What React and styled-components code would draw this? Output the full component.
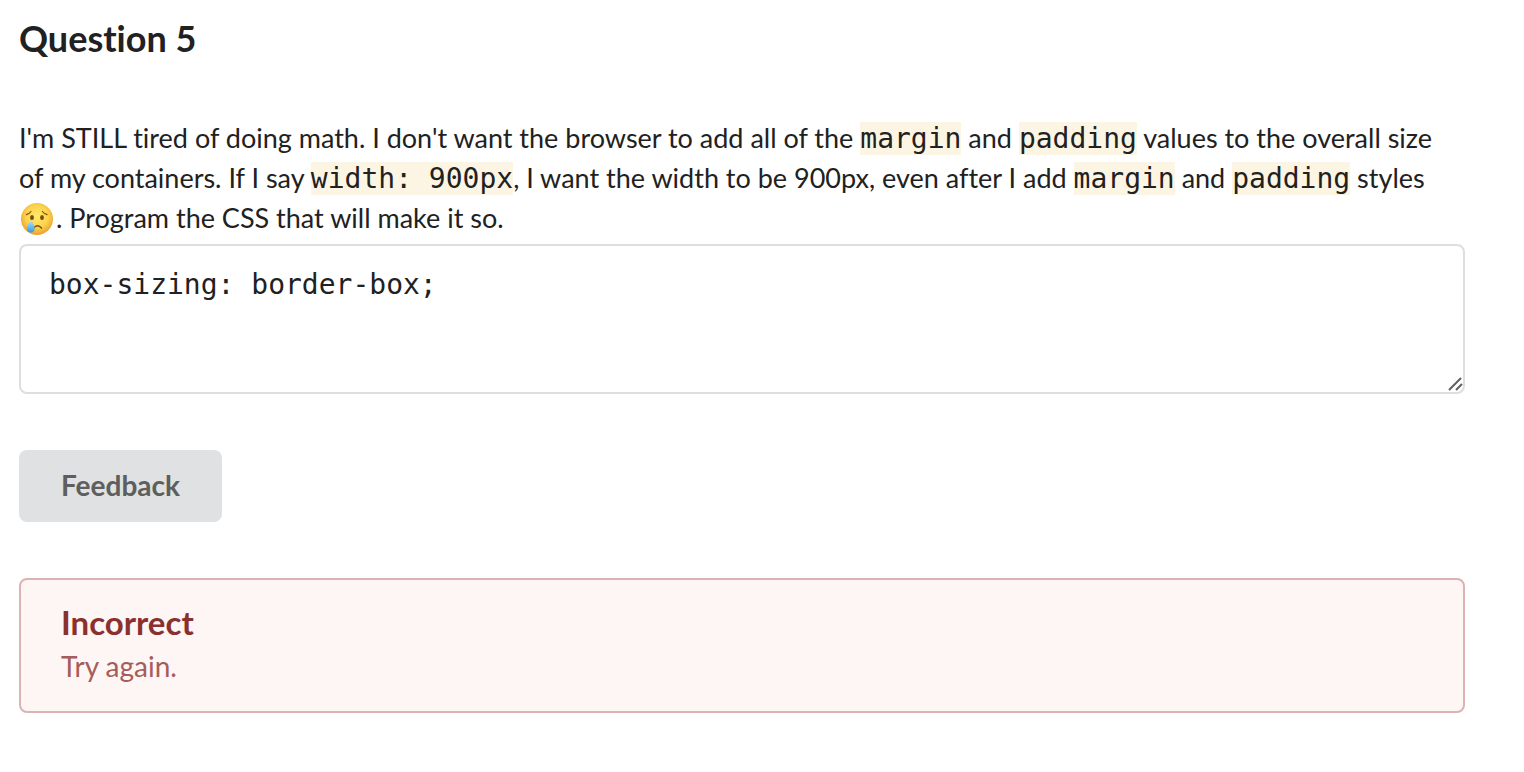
import React, { useState } from "react";
import styled, { createGlobalStyle } from "styled-components";

const GlobalStyle = createGlobalStyle`
	body {
		margin: 0;
		background: #ffffff;
		color: #212121;
		font-family: Lato, sans-serif;
		font-size: 28px;
		line-height: 40px;
		font-variant-ligatures: none;
	}
`;

const Question = styled.form`
	box-sizing: border-box;
	padding: 15px 59px 59px 19px;
`;

const Title = styled.h2`
	margin: 0 0 57px;
	font-size: 36px;
	line-height: 46px;
	font-weight: 700;
`;

const Prompt = styled.label`
	display: block;
	font-size: 27px;
`;

const PromptLine = styled.span`
	display: block;
`;

const Code = styled.code`
	background-color: #fdf5e3;
	font-family: "DejaVu Sans Mono", monospace;
	font-size: 28px;
	line-height: 32px;
`;

const CryingFace = styled.svg`
	width: 34px;
	height: 34px;
	margin: 0 2px 0 1px;
	vertical-align: -8px;
`;

const AnswerField = styled.div`
	position: relative;
	margin: 6px 0 56px;
`;

const Answer = styled.textarea`
	display: block;
	box-sizing: border-box;
	width: 100%;
	height: 150px;
	padding: 19px 28px;
	border: 2px solid #dededf;
	border-radius: 8px;
	outline: none;
	resize: vertical;
	background: #ffffff;
	color: #212121;
	font-family: "DejaVu Sans Mono", monospace;
	font-size: 28px;
	line-height: 40px;

	&::-webkit-resizer {
		background: transparent;
	}
`;

const ResizeGrip = styled.svg`
	position: absolute;
	right: 2px;
	bottom: 2px;
	width: 16px;
	height: 16px;
	pointer-events: none;
`;

const FeedbackButton = styled.button`
	display: block;
	padding: 15px 42px 17px;
	border: 0;
	border-radius: 8px;
	background-color: #e0e1e2;
	color: #5e5e5e;
	font-family: inherit;
	font-size: 28px;
	font-weight: 700;
	line-height: 40px;
	cursor: pointer;
`;

const Message = styled.div`
	margin-top: 56px;
	padding: 20px 40px 25px;
	border: 2px solid #dbb3b3;
	border-radius: 8px;
	background-color: #fef5f5;
	color: #a65c5a;
`;

const MessageHeader = styled.h3`
	margin: 0 0 2px;
	color: #8a302d;
	font-size: 33px;
	line-height: 44px;
	font-weight: 700;
`;

const MessageText = styled.p`
	margin: 0;
`;

const Cry = () => (
	<CryingFace viewBox="0 0 34 34" role="img" aria-label="crying face">
		<defs>
			<radialGradient id="face" cx="50%" cy="42%" r="58%">
				<stop offset="0" stopColor="#ffe96b" />
				<stop offset="0.6" stopColor="#fcd34c" />
				<stop offset="1" stopColor="#e8a030" />
			</radialGradient>
			<linearGradient id="tear" x1="0" y1="0" x2="0" y2="1">
				<stop offset="0" stopColor="#b5e2fb" />
				<stop offset="1" stopColor="#2f9be8" />
			</linearGradient>
		</defs>
		<circle cx="17" cy="17" r="16" fill="url(#face)" />
		<path
			d="M6.5 12.5q3-.6 4.5-3M22.5 9.5q1.5 2.4 4.5 3"
			fill="none"
			stroke="#8b5a16"
			strokeWidth="1.3"
			strokeLinecap="round"
		/>
		<ellipse cx="12" cy="15.5" rx="1.9" ry="2.6" fill="#7a4a12" />
		<ellipse cx="22" cy="15.5" rx="1.9" ry="2.6" fill="#7a4a12" />
		<path
			d="M13.5 26q4-4.5 8 0"
			fill="none"
			stroke="#7a4a12"
			strokeWidth="1.5"
			strokeLinecap="round"
		/>
		<path
			d="M11 18.5q-4.2 4.500-4.2 8a3.900 3.900 0 0 0 7.800 0q0-3.500-3.600-8"
			fill="url(#tear)"
		/>
	</CryingFace>
);

const App = () => {
	const [answer, setAnswer] = useState("box-sizing: border-box;");

	return (
		<>
			<GlobalStyle />
			<Question onSubmit={event => event.preventDefault()}>
				<Title>Question 5</Title>
				<Prompt htmlFor="answer">
					<PromptLine>
						I'm STILL tired of doing math. I don't want the browser to add all
						of the <Code>margin</Code> and <Code>padding</Code> values to the
						overall size
					</PromptLine>
					<PromptLine>
						of my containers. If I say <Code>width: 900px</Code>, I want the
						width to be 900px, even after I add <Code>margin</Code> and{" "}
						<Code>padding</Code> styles
					</PromptLine>
					<PromptLine>
						<Cry />. Program the CSS that will make it so.
					</PromptLine>
				</Prompt>
				<AnswerField>
					<Answer
						id="answer"
						spellCheck={false}
						value={answer}
						onChange={event => setAnswer(event.target.value)}
					/>
					<ResizeGrip viewBox="0 0 16 16" aria-hidden="true">
						<path
							d="M2 14L14 2M9 14L15 8"
							fill="none"
							stroke="#606060"
							strokeWidth="2"
						/>
					</ResizeGrip>
				</AnswerField>
				<FeedbackButton type="submit">Feedback</FeedbackButton>
				<Message role="alert">
					<MessageHeader>Incorrect</MessageHeader>
					<MessageText>Try again.</MessageText>
				</Message>
			</Question>
		</>
	);
};

export default App;
